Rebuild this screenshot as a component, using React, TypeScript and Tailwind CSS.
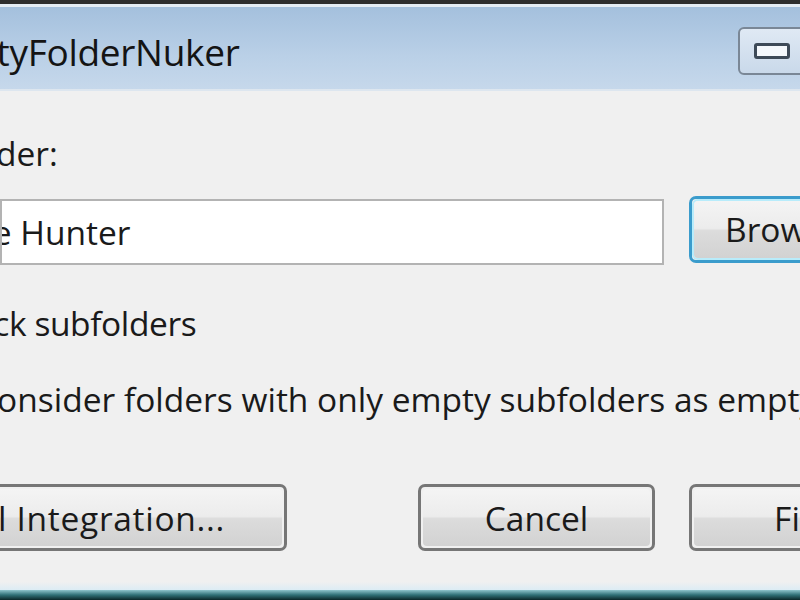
import React from "react";

const font = { fontFamily: '"Open Sans", "Noto Sans", Arial, sans-serif' };

function VistaButton({
  children,
  className = "",
  innerClassName = "justify-center",
  focused = false,
}: {
  children: React.ReactNode;
  className?: string;
  innerClassName?: string;
  focused?: boolean;
}) {
  return (
    <div
      className={
        "h-[67px] shrink-0 rounded-[7px] border-[3px] p-[2px] " +
        (focused ? "border-[#3b9ccc] " : "border-[#767676] ") +
        className
      }
    >
      <div
        className={
          "h-full rounded-[4px] flex items-center overflow-hidden bg-[linear-gradient(#f4f4f4_0%,#ececec_48%,#dcdcdc_52%,#d2d2d2_100%)] " +
          (focused ? "ring-2 ring-[#b8ecfb] " : "") +
          innerClassName
        }
      >
        {children}
      </div>
    </div>
  );
}

export default function App() {
  return (
    <div
      className="w-[800px] h-[600px] overflow-hidden flex flex-col bg-[#f0f0f0] text-[#1a1a1a]"
      style={font}
    >
      {/* top frame */}
      <div className="h-[4px] bg-[#2e2e2e]" />
      <div className="h-[3px] bg-[#e4ecf4]" />
      {/* title bar */}
      <div className="h-[84px] flex items-start justify-between bg-[linear-gradient(#a4c0dd,#bad0e7_60%,#c6d8eb)] border-b-[2px] border-[#dde6ef]">
        <div className="ml-[-80px] mt-[21px] text-[37px] leading-[48px] tracking-[-0.3px] text-[#141414] whitespace-nowrap">
          EmptyFolderNuker
        </div>
        <div className="mt-[20px] mr-[-12px] w-[74px] h-[48px] shrink-0 rounded-[6px] border-[2px] border-[#7a8796] bg-[linear-gradient(#dfe9f4,#c9d9ea)] flex items-center pl-[14px]">
          <div className="w-[36px] h-[16px] rounded-[3px] border-[3px] border-[#3d4a58] bg-[#f4f8fc]" />
        </div>
      </div>

      {/* body */}
      <div className="flex-1 flex flex-col">
        <div className="mt-[38px] ml-[-50px] text-[33.5px] leading-[48px] whitespace-nowrap">Folder:</div>
        <div className="mt-[22px] flex items-center">
          <div className="w-[664px] h-[66px] shrink-0 border-[2px] border-[#b3b3b3] bg-white flex items-center overflow-hidden">
            <div className="ml-[-42px] text-[33.5px] leading-[48px] whitespace-nowrap">Die Hunter</div>
          </div>
          <VistaButton focused className="ml-[25px] w-[130px] mt-[-6px]" innerClassName="justify-start pl-[31px]">
            <span className="text-[33.5px] leading-[48px]">Browse</span>
          </VistaButton>
        </div>
        <div className="mt-[34px] ml-[-66px] text-[33.5px] leading-[48px] tracking-[-0.4px] whitespace-nowrap">
          Check subfolders
        </div>
        <div className="mt-[28px] ml-[-24px] text-[33.5px] leading-[48px] whitespace-nowrap">
          Consider folders with only empty subfolders as empty
        </div>
        <div className="mt-[61px] flex items-center">
          <VistaButton className="ml-[-80px] w-[367px]" innerClassName="justify-end pr-[57px]">
            <span className="text-[33.5px] leading-[48px] tracking-[0.7px] whitespace-nowrap">Shell Integration...</span>
          </VistaButton>
          <VistaButton className="ml-[131px] w-[237px]">
            <span className="text-[33.5px] leading-[48px]">Cancel</span>
          </VistaButton>
          <VistaButton className="ml-[34px] w-[237px]">
            <span className="text-[33.5px] leading-[48px]">Find</span>
          </VistaButton>
        </div>
      </div>

      {/* bottom frame */}
      <div className="h-[8px] bg-[linear-gradient(#f0f0f0,#dcecf4)]" />
      <div className="h-[10px] bg-[linear-gradient(#8ec4cc,#2f6f76_50%,#0b2628)]" />
    </div>
  );
}
